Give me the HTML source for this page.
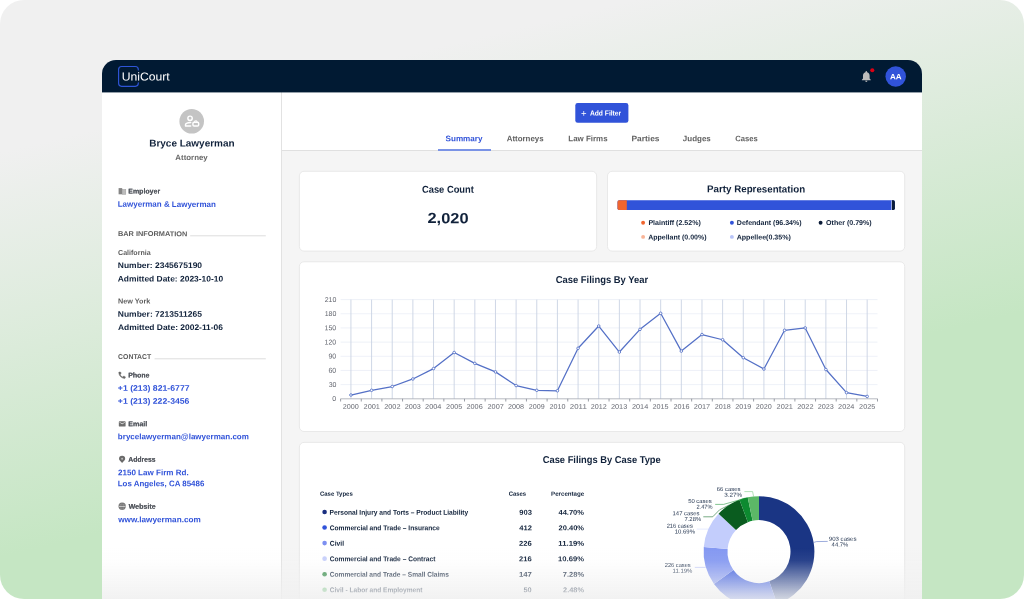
<!DOCTYPE html>
<html lang="en">
<head>
<meta charset="utf-8">
<title>UniCourt – Attorney Analytics</title>
<style>
html,body{margin:0;padding:0;background:#fff;}
body{width:1024px;height:599px;position:relative;overflow:hidden;font-family:"Liberation Sans",Arial,sans-serif;}
.abs{position:absolute;}
.bg{left:0;top:0;width:1024px;height:599px;border-radius:24px;background:linear-gradient(166.5deg,#f0f0f0 0%,#f0f0f0 18%,#c5e6c3 66%,#c5e6c3 100%);}
.app{left:102px;top:60px;width:820px;height:539px;border-radius:14px 14px 0 0;overflow:hidden;background:#f5f5f5;}
.hdr{left:0;top:0;width:820px;height:32px;background:#011a33;}
.side{left:0;top:32px;width:179px;height:507px;background:#fff;border-right:1px solid #e2e2e2;}
.tool{left:180px;top:32px;width:640px;height:58px;background:#fff;border-bottom:1px solid #e0e0e0;}
.t{position:absolute;white-space:nowrap;line-height:1;font-weight:700;transform-origin:0 50%;}
svg{position:absolute;left:0;top:0;overflow:visible;}
.fade{left:102px;top:548px;width:820px;height:51px;background:linear-gradient(to bottom,rgba(243,243,243,0) 0%,rgba(242,242,242,0.08) 25%,rgba(241,241,241,0.42) 57%,rgba(240,240,240,0.73) 86%,rgba(239,239,239,0.86) 100%);}
</style>
</head>
<body>
<div class="abs bg"></div>
<div class="abs app">
  <div class="abs hdr"></div>
  <div class="abs side"></div>
  <div class="abs tool"></div>
  <div class="abs" style="left:0;top:32px;width:820px;height:1px;background:rgba(1,26,51,0.42);"></div>
</div>

<svg width="1024" height="599" viewBox="0 0 1024 599">
  <!-- cards -->
  <g fill="#fff" stroke="#e7e7e7" stroke-width="0.9">
    <rect x="299.4" y="171.3" width="297.2" height="79.8" rx="4.6"/>
    <rect x="607.5" y="171.3" width="297.2" height="79.8" rx="4.6"/>
    <rect x="299.4" y="261.8" width="605.3" height="169.7" rx="4.6"/>
    <rect x="299.4" y="442.4" width="605.3" height="180" rx="4.6"/>
  </g>
</svg>

<!-- tab underline -->
<div class="abs" style="left:437.8px;top:148.6px;width:53.2px;height:2px;background:#7a93e6;"></div>

<svg width="1024" height="599" viewBox="0 0 1024 599">
  <!-- add filter button -->
  <rect x="575.3" y="103" width="53.1" height="19.8" rx="2.4" fill="#3153d9"/>
  <!-- avatar circles -->
  <circle cx="895.7" cy="76.4" r="10.25" fill="#3153d9"/>
  <circle cx="191.7" cy="121.2" r="12.3" fill="#c4c4c4"/>
  <!-- party representation bar -->
  <clipPath id="barclip"><rect x="617.5" y="200.3" width="277.4" height="9.6" rx="1.6"/></clipPath>
  <g clip-path="url(#barclip)">
    <rect x="617" y="200" width="279" height="10.4" fill="#3153d9"/>
    <rect x="617" y="200" width="9.8" height="10.4" fill="#f0652f"/>
    <rect x="891.1" y="200" width="0.9" height="10.4" fill="#b8c4f8"/>
    <rect x="891.9" y="200" width="4" height="10.4" fill="#0b1c38"/>
  </g>
  <!-- legend dots -->
  <circle cx="643.1" cy="222.75" r="1.95" fill="#f0652f"/>
  <circle cx="731.9" cy="222.75" r="1.95" fill="#3153d9"/>
  <circle cx="820.6" cy="222.75" r="1.95" fill="#0b1c38"/>
  <circle cx="643.1" cy="236.9" r="1.95" fill="#f9b497"/>
  <circle cx="731.9" cy="236.9" r="1.95" fill="#b8c4f8"/>
  <!-- table dots -->
  <circle cx="324.6" cy="512.00" r="2.3" fill="#1a2f80"/>
  <circle cx="324.6" cy="527.55" r="2.3" fill="#3153d9"/>
  <circle cx="324.6" cy="543.10" r="2.3" fill="#7d90f1"/>
  <circle cx="324.6" cy="558.65" r="2.3" fill="#c6cffb"/>
  <circle cx="324.6" cy="574.20" r="2.3" fill="#2f8a43"/>
  <circle cx="324.6" cy="589.75" r="2.3" fill="#6cc079"/>
  <!-- section rules -->
  <path d="M190.2 235.8H265.8M154.6 358.8H265.8" stroke="#d6d6d6" stroke-width="0.85" fill="none"/>
  <!-- logo bracket -->
  <path d="M138.3 70V69.5A3 3 0 0 0 135.3 66.5H121.6A3 3 0 0 0 118.6 69.5V83.3A3 3 0 0 0 121.6 86.3H135.3A3 3 0 0 0 138.3 83.3V82.8" fill="none" stroke="#2f55d8" stroke-width="1.15" stroke-linecap="round"/>
  <!-- bell -->
  <g transform="translate(859.65,69.7) scale(0.554)" fill="#bdbdbd"><path d="M12 22c1.1 0 2-.9 2-2h-4c0 1.1.89 2 2 2zm6-6v-5c0-3.07-1.64-5.64-4.5-6.32V4c0-.83-.67-1.5-1.5-1.5s-1.5.67-1.5 1.5v.68C7.63 5.36 6 7.92 6 11v5l-2 2v1h16v-1l-2-2z"/></g>
  <circle cx="872.3" cy="70.3" r="2.05" fill="#db0014"/>
  <!-- profile avatar glyph -->
  <g fill="none" stroke="#fff" stroke-width="1.45" stroke-linecap="round" stroke-linejoin="round">
    <circle cx="190.05" cy="118.3" r="2.2"/>
    <path d="M185.5 126V124.8C185.5 123.6 187.6 122.7 190.7 122.5M185.5 126H190.7"/>
    <rect x="192.95" y="122.2" width="5.7" height="3.8" rx="1.1"/>
    <path d="M194.7 121.7V120.9H196.9V121.7" stroke-width="1"/>
  </g>
  <!-- employer (building) -->
  <rect x="118.6" y="188.1" width="3.6" height="6.2" fill="#858585"/>
  <rect x="122.2" y="189.5" width="3.6" height="4.8" fill="#bcbcbc" stroke="#9c9c9c" stroke-width="0.5"/>
  <!-- phone -->
  <g transform="translate(117.75,370.95) scale(0.355)" fill="#686868" stroke="#686868" stroke-width="1.4" stroke-linejoin="round"><path d="M6.62 10.79c1.44 2.83 3.76 5.14 6.59 6.59l2.2-2.2c.27-.27.67-.36 1.02-.24 1.12.37 2.33.57 3.57.57.55 0 1 .45 1 1V20c0 .55-.45 1-1 1-9.390 0-17-7.610-17-17 0-.55.45-1 1-1h3.5c.55 0 1 .45 1 1 0 1.250.2 2.450.57 3.570.11.35.03.74-.25 1.020l-2.200 2.200z"/></g>
  <!-- email -->
  <g transform="translate(118.15,419.85) scale(0.338)" fill="#6e6e6e"><path d="M20 4H4c-1.100 0-1.990.9-1.990 2L2 18c0 1.100.9 2 2 2h16c1.100 0 2-.9 2-2V6c0-1.100-.9-2-2-2zm0 4l-8 5-8-5V6l8 5 8-5v2z"/></g>
  <!-- address pin -->
  <path d="M122.1 463.1C120.6 461 119 460.1 119 458.9A3.1 3.1 0 0 1 125.2 458.9C125.2 460.1 123.6 461 122.1 463.1Z" fill="#6a6a6a"/>
  <circle cx="122.1" cy="458.8" r="1" fill="#fff" opacity="0.55"/>
  <!-- website globe -->
  <circle cx="122.15" cy="506.25" r="3.65" fill="#737373"/>
  <g fill="none" stroke="#fff"><path d="M118.7 506.4H125.6" stroke-width="0.75" opacity="0.85"/><path d="M119.4 504.5H124.9M119.4 508.2H124.9" stroke-width="0.4" opacity="0.3"/><ellipse cx="122.15" cy="506.25" rx="1.5" ry="3.5" stroke-width="0.35" opacity="0.3"/></g>
  <!-- line chart -->
<line x1="340.6" x2="877.5" y1="384.63" y2="384.63" stroke="#e6ebf5" stroke-width="0.7"/>
<line x1="340.6" x2="877.5" y1="370.46" y2="370.46" stroke="#e6ebf5" stroke-width="0.7"/>
<line x1="340.6" x2="877.5" y1="356.29" y2="356.29" stroke="#e6ebf5" stroke-width="0.7"/>
<line x1="340.6" x2="877.5" y1="342.11" y2="342.11" stroke="#e6ebf5" stroke-width="0.7"/>
<line x1="340.6" x2="877.5" y1="327.94" y2="327.94" stroke="#e6ebf5" stroke-width="0.7"/>
<line x1="340.6" x2="877.5" y1="313.77" y2="313.77" stroke="#e6ebf5" stroke-width="0.7"/>
<line x1="340.6" x2="877.5" y1="299.60" y2="299.60" stroke="#e6ebf5" stroke-width="0.7"/>
<line x1="350.93" x2="350.93" y1="299.6" y2="398.8" stroke="#c9d2e3" stroke-width="0.9"/>
<line x1="371.58" x2="371.58" y1="299.6" y2="398.8" stroke="#c9d2e3" stroke-width="0.9"/>
<line x1="392.23" x2="392.23" y1="299.6" y2="398.8" stroke="#c9d2e3" stroke-width="0.9"/>
<line x1="412.88" x2="412.88" y1="299.6" y2="398.8" stroke="#c9d2e3" stroke-width="0.9"/>
<line x1="433.53" x2="433.53" y1="299.6" y2="398.8" stroke="#c9d2e3" stroke-width="0.9"/>
<line x1="454.18" x2="454.18" y1="299.6" y2="398.8" stroke="#c9d2e3" stroke-width="0.9"/>
<line x1="474.83" x2="474.83" y1="299.6" y2="398.8" stroke="#c9d2e3" stroke-width="0.9"/>
<line x1="495.48" x2="495.48" y1="299.6" y2="398.8" stroke="#c9d2e3" stroke-width="0.9"/>
<line x1="516.12" x2="516.12" y1="299.6" y2="398.8" stroke="#c9d2e3" stroke-width="0.9"/>
<line x1="536.77" x2="536.77" y1="299.6" y2="398.8" stroke="#c9d2e3" stroke-width="0.9"/>
<line x1="557.42" x2="557.42" y1="299.6" y2="398.8" stroke="#c9d2e3" stroke-width="0.9"/>
<line x1="578.08" x2="578.08" y1="299.6" y2="398.8" stroke="#c9d2e3" stroke-width="0.9"/>
<line x1="598.73" x2="598.73" y1="299.6" y2="398.8" stroke="#c9d2e3" stroke-width="0.9"/>
<line x1="619.38" x2="619.38" y1="299.6" y2="398.8" stroke="#c9d2e3" stroke-width="0.9"/>
<line x1="640.02" x2="640.02" y1="299.6" y2="398.8" stroke="#c9d2e3" stroke-width="0.9"/>
<line x1="660.67" x2="660.67" y1="299.6" y2="398.8" stroke="#c9d2e3" stroke-width="0.9"/>
<line x1="681.33" x2="681.33" y1="299.6" y2="398.8" stroke="#c9d2e3" stroke-width="0.9"/>
<line x1="701.98" x2="701.98" y1="299.6" y2="398.8" stroke="#c9d2e3" stroke-width="0.9"/>
<line x1="722.62" x2="722.62" y1="299.6" y2="398.8" stroke="#c9d2e3" stroke-width="0.9"/>
<line x1="743.27" x2="743.27" y1="299.6" y2="398.8" stroke="#c9d2e3" stroke-width="0.9"/>
<line x1="763.92" x2="763.92" y1="299.6" y2="398.8" stroke="#c9d2e3" stroke-width="0.9"/>
<line x1="784.58" x2="784.58" y1="299.6" y2="398.8" stroke="#c9d2e3" stroke-width="0.9"/>
<line x1="805.22" x2="805.22" y1="299.6" y2="398.8" stroke="#c9d2e3" stroke-width="0.9"/>
<line x1="825.88" x2="825.88" y1="299.6" y2="398.8" stroke="#c9d2e3" stroke-width="0.9"/>
<line x1="846.52" x2="846.52" y1="299.6" y2="398.8" stroke="#c9d2e3" stroke-width="0.9"/>
<line x1="867.17" x2="867.17" y1="299.6" y2="398.8" stroke="#c9d2e3" stroke-width="0.9"/>
<line x1="340.6" x2="877.5" y1="398.8" y2="398.8" stroke="#a4a8b2" stroke-width="0.8"/>
<line x1="340.60" x2="340.60" y1="398.8" y2="401.5" stroke="#7a7e88" stroke-width="0.75"/>
<line x1="361.25" x2="361.25" y1="398.8" y2="401.5" stroke="#7a7e88" stroke-width="0.75"/>
<line x1="381.90" x2="381.90" y1="398.8" y2="401.5" stroke="#7a7e88" stroke-width="0.75"/>
<line x1="402.55" x2="402.55" y1="398.8" y2="401.5" stroke="#7a7e88" stroke-width="0.75"/>
<line x1="423.20" x2="423.20" y1="398.8" y2="401.5" stroke="#7a7e88" stroke-width="0.75"/>
<line x1="443.85" x2="443.85" y1="398.8" y2="401.5" stroke="#7a7e88" stroke-width="0.75"/>
<line x1="464.50" x2="464.50" y1="398.8" y2="401.5" stroke="#7a7e88" stroke-width="0.75"/>
<line x1="485.15" x2="485.15" y1="398.8" y2="401.5" stroke="#7a7e88" stroke-width="0.75"/>
<line x1="505.80" x2="505.80" y1="398.8" y2="401.5" stroke="#7a7e88" stroke-width="0.75"/>
<line x1="526.45" x2="526.45" y1="398.8" y2="401.5" stroke="#7a7e88" stroke-width="0.75"/>
<line x1="547.10" x2="547.10" y1="398.8" y2="401.5" stroke="#7a7e88" stroke-width="0.75"/>
<line x1="567.75" x2="567.75" y1="398.8" y2="401.5" stroke="#7a7e88" stroke-width="0.75"/>
<line x1="588.40" x2="588.40" y1="398.8" y2="401.5" stroke="#7a7e88" stroke-width="0.75"/>
<line x1="609.05" x2="609.05" y1="398.8" y2="401.5" stroke="#7a7e88" stroke-width="0.75"/>
<line x1="629.70" x2="629.70" y1="398.8" y2="401.5" stroke="#7a7e88" stroke-width="0.75"/>
<line x1="650.35" x2="650.35" y1="398.8" y2="401.5" stroke="#7a7e88" stroke-width="0.75"/>
<line x1="671.00" x2="671.00" y1="398.8" y2="401.5" stroke="#7a7e88" stroke-width="0.75"/>
<line x1="691.65" x2="691.65" y1="398.8" y2="401.5" stroke="#7a7e88" stroke-width="0.75"/>
<line x1="712.30" x2="712.30" y1="398.8" y2="401.5" stroke="#7a7e88" stroke-width="0.75"/>
<line x1="732.95" x2="732.95" y1="398.8" y2="401.5" stroke="#7a7e88" stroke-width="0.75"/>
<line x1="753.60" x2="753.60" y1="398.8" y2="401.5" stroke="#7a7e88" stroke-width="0.75"/>
<line x1="774.25" x2="774.25" y1="398.8" y2="401.5" stroke="#7a7e88" stroke-width="0.75"/>
<line x1="794.90" x2="794.90" y1="398.8" y2="401.5" stroke="#7a7e88" stroke-width="0.75"/>
<line x1="815.55" x2="815.55" y1="398.8" y2="401.5" stroke="#7a7e88" stroke-width="0.75"/>
<line x1="836.20" x2="836.20" y1="398.8" y2="401.5" stroke="#7a7e88" stroke-width="0.75"/>
<line x1="856.85" x2="856.85" y1="398.8" y2="401.5" stroke="#7a7e88" stroke-width="0.75"/>
<line x1="877.50" x2="877.50" y1="398.8" y2="401.5" stroke="#7a7e88" stroke-width="0.75"/>
<polyline fill="none" stroke="#5470c6" stroke-width="1.25" stroke-linejoin="round" points="350.93,395.02 371.58,390.30 392.23,386.52 412.88,378.96 433.53,368.57 454.18,352.51 474.83,363.37 495.48,371.87 516.12,385.57 536.77,390.30 557.42,390.77 578.08,348.26 598.73,326.05 619.38,352.03 640.02,329.36 660.67,313.30 681.33,351.09 701.98,334.56 722.62,339.75 743.27,357.70 763.92,369.04 784.58,330.30 805.22,327.94 825.88,369.51 846.52,392.66 867.17,396.44"/>
<circle cx="350.93" cy="395.02" r="1.3" fill="#fff" stroke="#5470c6" stroke-width="0.85"/>
<circle cx="371.58" cy="390.30" r="1.3" fill="#fff" stroke="#5470c6" stroke-width="0.85"/>
<circle cx="392.23" cy="386.52" r="1.3" fill="#fff" stroke="#5470c6" stroke-width="0.85"/>
<circle cx="412.88" cy="378.96" r="1.3" fill="#fff" stroke="#5470c6" stroke-width="0.85"/>
<circle cx="433.53" cy="368.57" r="1.3" fill="#fff" stroke="#5470c6" stroke-width="0.85"/>
<circle cx="454.18" cy="352.51" r="1.3" fill="#fff" stroke="#5470c6" stroke-width="0.85"/>
<circle cx="474.83" cy="363.37" r="1.3" fill="#fff" stroke="#5470c6" stroke-width="0.85"/>
<circle cx="495.48" cy="371.87" r="1.3" fill="#fff" stroke="#5470c6" stroke-width="0.85"/>
<circle cx="516.12" cy="385.57" r="1.3" fill="#fff" stroke="#5470c6" stroke-width="0.85"/>
<circle cx="536.77" cy="390.30" r="1.3" fill="#fff" stroke="#5470c6" stroke-width="0.85"/>
<circle cx="557.42" cy="390.77" r="1.3" fill="#fff" stroke="#5470c6" stroke-width="0.85"/>
<circle cx="578.08" cy="348.26" r="1.3" fill="#fff" stroke="#5470c6" stroke-width="0.85"/>
<circle cx="598.73" cy="326.05" r="1.3" fill="#fff" stroke="#5470c6" stroke-width="0.85"/>
<circle cx="619.38" cy="352.03" r="1.3" fill="#fff" stroke="#5470c6" stroke-width="0.85"/>
<circle cx="640.02" cy="329.36" r="1.3" fill="#fff" stroke="#5470c6" stroke-width="0.85"/>
<circle cx="660.67" cy="313.30" r="1.3" fill="#fff" stroke="#5470c6" stroke-width="0.85"/>
<circle cx="681.33" cy="351.09" r="1.3" fill="#fff" stroke="#5470c6" stroke-width="0.85"/>
<circle cx="701.98" cy="334.56" r="1.3" fill="#fff" stroke="#5470c6" stroke-width="0.85"/>
<circle cx="722.62" cy="339.75" r="1.3" fill="#fff" stroke="#5470c6" stroke-width="0.85"/>
<circle cx="743.27" cy="357.70" r="1.3" fill="#fff" stroke="#5470c6" stroke-width="0.85"/>
<circle cx="763.92" cy="369.04" r="1.3" fill="#fff" stroke="#5470c6" stroke-width="0.85"/>
<circle cx="784.58" cy="330.30" r="1.3" fill="#fff" stroke="#5470c6" stroke-width="0.85"/>
<circle cx="805.22" cy="327.94" r="1.3" fill="#fff" stroke="#5470c6" stroke-width="0.85"/>
<circle cx="825.88" cy="369.51" r="1.3" fill="#fff" stroke="#5470c6" stroke-width="0.85"/>
<circle cx="846.52" cy="392.66" r="1.3" fill="#fff" stroke="#5470c6" stroke-width="0.85"/>
<circle cx="867.17" cy="396.44" r="1.3" fill="#fff" stroke="#5470c6" stroke-width="0.85"/>
  <!-- donut -->
<path d="M759.00 496.20A55.4 55.4 0 0 1 777.10 603.96L769.29 581.37A31.5 31.5 0 0 0 759.00 520.10Z" fill="#1a3584"/>
<path d="M777.10 603.96A55.4 55.4 0 0 1 713.98 583.88L733.40 569.96A31.5 31.5 0 0 0 769.29 581.37Z" fill="#3f5fe0"/>
<path d="M713.98 583.88A55.4 55.4 0 0 1 703.78 547.12L727.60 549.06A31.5 31.5 0 0 0 733.40 569.96Z" fill="#8599f2"/>
<path d="M703.78 547.12A55.4 55.4 0 0 1 718.57 513.73L736.01 530.07A31.5 31.5 0 0 0 727.60 549.06Z" fill="#c3cdfc"/>
<path d="M718.57 513.73A55.4 55.4 0 0 1 739.44 499.77L747.88 522.13A31.5 31.5 0 0 0 736.01 530.07Z" fill="#0a5c1f"/>
<path d="M739.44 499.77A55.4 55.4 0 0 1 747.71 497.36L752.58 520.76A31.5 31.5 0 0 0 747.88 522.13Z" fill="#0d8a30"/>
<path d="M747.71 497.36A55.4 55.4 0 0 1 759.00 496.20L759.00 520.10A31.5 31.5 0 0 0 752.58 520.76Z" fill="#5cb867"/>
<polyline fill="none" stroke="#5b74c4" stroke-width="0.6" points="813.8,542.4 816.5,541.6 827.7,541.4"/>
<polyline fill="none" stroke="#7cc987" stroke-width="0.6" points="753.6,496.6 752.6,491.6 744.4,491.6"/>
<polyline fill="none" stroke="#2e9a45" stroke-width="0.6" points="744.6,498.2 740.5,499.6 723.6,504.4 715.2,504.4"/>
<polyline fill="none" stroke="#1d7030" stroke-width="0.6" points="729.5,504.8 719.6,509.8 712.7,516.8 703.3,516.8"/>
<polyline fill="none" stroke="#d5dcfd" stroke-width="0.6" points="708.4,529.1 696.8,529.1"/>
<polyline fill="none" stroke="#a9b7f6" stroke-width="0.6" points="705.7,567.4 694.8,567.4"/>
</svg>

<div class="abs" id="txt" style="left:0;top:0;width:1024px;height:599px;will-change:transform;">
<span class="t" style="left:121px;top:71px;font-size:11.5px;color:#fff;font-weight:400;transform:translate(0.70px,0.47px) rotate(0.03deg) scaleX(1.0573);">UniCourt</span>
<span class="t" style="left:889px;top:73px;font-size:7.6px;color:#fff;transform:translate(0.98px,0.37px) rotate(0.03deg) scaleX(1.0605);">AA</span>
<span class="t" style="left:149px;top:138px;font-size:9.9px;color:#10213a;transform:translate(0.25px,0.40px) rotate(0.03deg) scaleX(1.0096);">Bryce Lawyerman</span>
<span class="t" style="left:175px;top:153px;font-size:7.8px;color:#686868;transform:translate(0.37px,0.90px) rotate(0.03deg) scaleX(1.0092);">Attorney</span>
<span class="t" style="left:128px;top:188px;font-size:7.1px;color:#575b62;transform:translate(0.21px,0.50px) rotate(0.03deg) scaleX(0.9866);text-shadow:0.15px 0 0 #575b62;">Employer</span>
<span class="t" style="left:117px;top:200px;font-size:8.1px;color:#3153d9;transform:translate(0.71px,0.85px) rotate(0.03deg) scaleX(0.9869);">Lawyerman &amp; Lawyerman</span>
<span class="t" style="left:117px;top:230px;font-size:7.0px;color:#5c5c5c;transform:translate(0.98px,0.10px) rotate(0.03deg) scaleX(1.0506);">BAR INFORMATION</span>
<span class="t" style="left:118px;top:248px;font-size:7.2px;color:#5c5c5c;transform:translate(0.03px,0.90px) rotate(0.03deg) scaleX(0.9835);">California</span>
<span class="t" style="left:117px;top:262px;font-size:8.1px;color:#10213a;transform:translate(0.83px,0.05px) rotate(0.03deg) scaleX(1.0460);">Number: 2345675190</span>
<span class="t" style="left:117px;top:275px;font-size:8.1px;color:#10213a;transform:translate(0.74px,0.45px) rotate(0.03deg) scaleX(1.0412);">Admitted Date: 2023-10-10</span>
<span class="t" style="left:117px;top:297px;font-size:7.2px;color:#5c5c5c;transform:translate(0.99px,0.40px) rotate(0.03deg) scaleX(1.0069);">New York</span>
<span class="t" style="left:117px;top:310px;font-size:8.1px;color:#10213a;transform:translate(0.79px,0.75px) rotate(0.03deg) scaleX(1.0502);">Number: 7213511265</span>
<span class="t" style="left:117px;top:324px;font-size:8.1px;color:#10213a;transform:translate(0.90px,0.05px) rotate(0.03deg) scaleX(1.0432);">Admitted Date: 2002-11-06</span>
<span class="t" style="left:118px;top:353px;font-size:7.0px;color:#5c5c5c;transform:translate(0.09px,0.00px) rotate(0.03deg) scaleX(0.9854);">CONTACT</span>
<span class="t" style="left:128px;top:372px;font-size:7.1px;color:#575b62;transform:translate(0.21px,0.60px) rotate(0.03deg) scaleX(0.9759);text-shadow:0.15px 0 0 #575b62;">Phone</span>
<span class="t" style="left:117px;top:384px;font-size:8.1px;color:#3153d9;transform:translate(0.84px,0.65px) rotate(0.03deg) scaleX(1.0729);">+1 (213) 821-6777</span>
<span class="t" style="left:117px;top:397px;font-size:8.1px;color:#3153d9;transform:translate(0.84px,0.65px) rotate(0.03deg) scaleX(1.0711);">+1 (213) 222-3456</span>
<span class="t" style="left:128px;top:421px;font-size:7.1px;color:#575b62;transform:translate(0.18px,0.20px) rotate(0.03deg) scaleX(1.0016);text-shadow:0.15px 0 0 #575b62;">Email</span>
<span class="t" style="left:117px;top:433px;font-size:8.1px;color:#3153d9;transform:translate(0.87px,0.15px) rotate(0.03deg) scaleX(0.9923);">brycelawyerman@lawyerman.com</span>
<span class="t" style="left:128px;top:456px;font-size:7.1px;color:#575b62;transform:translate(0.22px,0.80px) rotate(0.03deg) scaleX(0.9606);text-shadow:0.15px 0 0 #575b62;">Address</span>
<span class="t" style="left:117px;top:469px;font-size:8.1px;color:#3153d9;transform:translate(0.93px,0.15px) rotate(0.03deg) scaleX(0.9958);">2150 Law Firm Rd.</span>
<span class="t" style="left:117px;top:480px;font-size:8.1px;color:#3153d9;transform:translate(0.73px,0.25px) rotate(0.03deg) scaleX(0.9786);">Los Angeles, CA 85486</span>
<span class="t" style="left:128px;top:503px;font-size:7.1px;color:#575b62;transform:translate(0.57px,0.80px) rotate(0.03deg) scaleX(0.9972);text-shadow:0.15px 0 0 #575b62;">Website</span>
<span class="t" style="left:118px;top:516px;font-size:8.1px;color:#3153d9;transform:translate(0.14px,0.25px) rotate(0.03deg) scaleX(1.0136);">www.lawyerman.com</span>
<span class="t" style="left:580px;top:108px;font-size:9.5px;color:#fff;font-weight:400;transform:translate(0.88px,0.50px) rotate(0.03deg);">+</span>
<span class="t" style="left:589px;top:109px;font-size:7.2px;color:#fff;transform:translate(0.88px,0.40px) rotate(0.03deg) scaleX(0.9337);">Add Filter</span>
<span class="t" style="left:445px;top:135px;font-size:8.1px;color:#3153d9;transform:translate(0.51px,0.35px) rotate(0.03deg) scaleX(1.0039);">Summary</span>
<span class="t" style="left:506px;top:135px;font-size:8.0px;color:#616161;transform:translate(0.70px,0.30px) rotate(0.03deg) scaleX(0.9896);">Attorneys</span>
<span class="t" style="left:568px;top:135px;font-size:8.0px;color:#616161;transform:translate(0.34px,0.30px) rotate(0.03deg) scaleX(0.9917);">Law Firms</span>
<span class="t" style="left:631px;top:135px;font-size:8.0px;color:#616161;transform:translate(0.52px,0.30px) rotate(0.03deg) scaleX(1.0483);">Parties</span>
<span class="t" style="left:682px;top:135px;font-size:8.0px;color:#616161;transform:translate(0.81px,0.30px) rotate(0.03deg) scaleX(0.9981);">Judges</span>
<span class="t" style="left:735px;top:135px;font-size:8.0px;color:#616161;transform:translate(0.21px,0.30px) rotate(0.03deg) scaleX(0.9542);">Cases</span>
<span class="t" style="left:421px;top:184px;font-size:10.0px;color:#10213a;transform:translate(0.97px,0.65px) rotate(0.03deg) scaleX(0.9337);">Case Count</span>
<span class="t" style="left:427px;top:211px;font-size:14.8px;color:#10213a;transform:translate(0.51px,0.12px) rotate(0.03deg) scaleX(1.1071);">2,020</span>
<span class="t" style="left:707px;top:184px;font-size:10.0px;color:#10213a;transform:translate(0.08px,0.35px) rotate(0.03deg) scaleX(0.9750);">Party Representation</span>
<span class="t" style="left:648px;top:219px;font-size:7px;color:#10213a;transform:translate(0.39px,0.00px) rotate(0.03deg) scaleX(1.0040);">Plaintiff (2.52%)</span>
<span class="t" style="left:736px;top:219px;font-size:7px;color:#10213a;transform:translate(0.82px,0.00px) rotate(0.03deg) scaleX(1.0033);">Defendant (96.34%)</span>
<span class="t" style="left:826px;top:219px;font-size:7px;color:#10213a;transform:translate(0.04px,0.00px) rotate(0.03deg) scaleX(1.0108);">Other (0.79%)</span>
<span class="t" style="left:648px;top:233px;font-size:7px;color:#10213a;transform:translate(0.13px,0.40px) rotate(0.03deg) scaleX(1.0010);">Appellant (0.00%)</span>
<span class="t" style="left:736px;top:233px;font-size:7px;color:#10213a;transform:translate(0.69px,0.40px) rotate(0.03deg) scaleX(1.0085);">Appellee(0.35%)</span>
<span class="t" style="left:555px;top:275px;font-size:10.0px;color:#10213a;transform:translate(0.69px,0.05px) rotate(0.03deg) scaleX(0.9420);">Case Filings By Year</span>
<span class="t" style="left:542px;top:455px;font-size:10.0px;color:#10213a;transform:translate(0.77px,0.15px) rotate(0.03deg) scaleX(0.9324);">Case Filings By Case Type</span>
<span class="t" style="left:332px;top:395px;font-size:7.0px;color:#63666f;font-weight:400;transform:translate(0.16px,0.10px) rotate(0.03deg);">0</span>
<span class="t" style="left:328px;top:380px;font-size:7.0px;color:#63666f;font-weight:400;transform:translate(0.68px,0.93px) rotate(0.03deg);">30</span>
<span class="t" style="left:328px;top:366px;font-size:7.0px;color:#63666f;font-weight:400;transform:translate(0.43px,0.76px) rotate(0.03deg);">60</span>
<span class="t" style="left:328px;top:352px;font-size:7.0px;color:#63666f;font-weight:400;transform:translate(0.46px,0.59px) rotate(0.03deg);">90</span>
<span class="t" style="left:324px;top:338px;font-size:7.0px;color:#63666f;font-weight:400;transform:translate(0.55px,0.41px) rotate(0.03deg);">120</span>
<span class="t" style="left:324px;top:324px;font-size:7.0px;color:#63666f;font-weight:400;transform:translate(0.57px,0.24px) rotate(0.03deg);">150</span>
<span class="t" style="left:324px;top:310px;font-size:7.0px;color:#63666f;font-weight:400;transform:translate(0.68px,0.07px) rotate(0.03deg);">180</span>
<span class="t" style="left:324px;top:295px;font-size:7.0px;color:#63666f;font-weight:400;transform:translate(0.68px,0.90px) rotate(0.03deg);">210</span>
<span class="t" style="left:342px;top:403px;font-size:6.7px;color:#63666f;font-weight:400;transform:translate(0.79px,0.73px) rotate(0.03deg) scaleX(1.0780);">2000</span>
<span class="t" style="left:363px;top:403px;font-size:6.7px;color:#63666f;font-weight:400;transform:translate(0.57px,0.73px) rotate(0.03deg) scaleX(1.1005);">2001</span>
<span class="t" style="left:384px;top:403px;font-size:6.7px;color:#63666f;font-weight:400;transform:translate(0.20px,0.73px) rotate(0.03deg) scaleX(1.0958);">2002</span>
<span class="t" style="left:404px;top:403px;font-size:6.7px;color:#63666f;font-weight:400;transform:translate(0.65px,0.73px) rotate(0.03deg) scaleX(1.0883);">2003</span>
<span class="t" style="left:425px;top:403px;font-size:6.7px;color:#63666f;font-weight:400;transform:translate(0.09px,0.73px) rotate(0.03deg) scaleX(1.0989);">2004</span>
<span class="t" style="left:446px;top:403px;font-size:6.7px;color:#63666f;font-weight:400;transform:translate(0.10px,0.73px) rotate(0.03deg) scaleX(1.0832);">2005</span>
<span class="t" style="left:466px;top:403px;font-size:6.7px;color:#63666f;font-weight:400;transform:translate(0.48px,0.73px) rotate(0.03deg) scaleX(1.0890);">2006</span>
<span class="t" style="left:487px;top:403px;font-size:6.7px;color:#63666f;font-weight:400;transform:translate(0.54px,0.73px) rotate(0.03deg) scaleX(1.0930);">2007</span>
<span class="t" style="left:508px;top:403px;font-size:6.7px;color:#63666f;font-weight:400;transform:translate(0.01px,0.73px) rotate(0.03deg) scaleX(1.0749);">2008</span>
<span class="t" style="left:528px;top:403px;font-size:6.7px;color:#63666f;font-weight:400;transform:translate(0.77px,0.73px) rotate(0.03deg) scaleX(1.0653);">2009</span>
<span class="t" style="left:549px;top:403px;font-size:6.7px;color:#63666f;font-weight:400;transform:translate(0.43px,0.73px) rotate(0.03deg) scaleX(1.0730);">2010</span>
<span class="t" style="left:569px;top:403px;font-size:6.7px;color:#63666f;font-weight:400;transform:translate(0.83px,0.73px) rotate(0.03deg) scaleX(1.1796);">2011</span>
<span class="t" style="left:590px;top:403px;font-size:6.7px;color:#63666f;font-weight:400;transform:translate(0.71px,0.73px) rotate(0.03deg) scaleX(1.0741);">2012</span>
<span class="t" style="left:610px;top:403px;font-size:6.7px;color:#63666f;font-weight:400;transform:translate(0.91px,0.73px) rotate(0.03deg) scaleX(1.0996);">2013</span>
<span class="t" style="left:631px;top:403px;font-size:6.7px;color:#63666f;font-weight:400;transform:translate(0.96px,0.73px) rotate(0.03deg) scaleX(1.0963);">2014</span>
<span class="t" style="left:652px;top:403px;font-size:6.7px;color:#63666f;font-weight:400;transform:translate(0.42px,0.73px) rotate(0.03deg) scaleX(1.0807);">2015</span>
<span class="t" style="left:673px;top:403px;font-size:6.7px;color:#63666f;font-weight:400;transform:translate(0.39px,0.73px) rotate(0.03deg) scaleX(1.0817);">2016</span>
<span class="t" style="left:693px;top:403px;font-size:6.7px;color:#63666f;font-weight:400;transform:translate(0.83px,0.73px) rotate(0.03deg) scaleX(1.0969);">2017</span>
<span class="t" style="left:714px;top:403px;font-size:6.7px;color:#63666f;font-weight:400;transform:translate(0.69px,0.73px) rotate(0.03deg) scaleX(1.0738);">2018</span>
<span class="t" style="left:735px;top:403px;font-size:6.7px;color:#63666f;font-weight:400;transform:translate(0.27px,0.73px) rotate(0.03deg) scaleX(1.0783);">2019</span>
<span class="t" style="left:755px;top:403px;font-size:6.7px;color:#63666f;font-weight:400;transform:translate(0.79px,0.73px) rotate(0.03deg) scaleX(1.0780);">2020</span>
<span class="t" style="left:776px;top:403px;font-size:6.7px;color:#63666f;font-weight:400;transform:translate(0.57px,0.73px) rotate(0.03deg) scaleX(1.1005);">2021</span>
<span class="t" style="left:797px;top:403px;font-size:6.7px;color:#63666f;font-weight:400;transform:translate(0.20px,0.73px) rotate(0.03deg) scaleX(1.0958);">2022</span>
<span class="t" style="left:817px;top:403px;font-size:6.7px;color:#63666f;font-weight:400;transform:translate(0.65px,0.73px) rotate(0.03deg) scaleX(1.0883);">2023</span>
<span class="t" style="left:838px;top:403px;font-size:6.7px;color:#63666f;font-weight:400;transform:translate(0.09px,0.73px) rotate(0.03deg) scaleX(1.0989);">2024</span>
<span class="t" style="left:859px;top:403px;font-size:6.7px;color:#63666f;font-weight:400;transform:translate(0.10px,0.73px) rotate(0.03deg) scaleX(1.0832);">2025</span>
<span class="t" style="left:319px;top:490px;font-size:6px;color:#10213a;transform:translate(0.92px,0.70px) rotate(0.03deg) scaleX(0.9977);">Case Types</span>
<span class="t" style="left:508px;top:490px;font-size:6px;color:#10213a;transform:translate(0.65px,0.70px) rotate(0.03deg) scaleX(0.9887);">Cases</span>
<span class="t" style="left:551px;top:490px;font-size:6px;color:#10213a;transform:translate(0.10px,0.70px) rotate(0.03deg) scaleX(1.0234);">Percentage</span>
<span class="t" style="left:329px;top:508px;font-size:7px;color:#10213a;transform:translate(0.54px,0.70px) rotate(0.03deg) scaleX(0.9467);">Personal Injury and Torts – Product Liability</span>
<span class="t" style="left:519px;top:508px;font-size:7px;color:#10213a;transform:translate(0.23px,0.70px) rotate(0.03deg) scaleX(1.0844);">903</span>
<span class="t" style="left:558px;top:508px;font-size:7px;color:#10213a;transform:translate(0.45px,0.70px) rotate(0.03deg) scaleX(1.0749);">44.70%</span>
<span class="t" style="left:329px;top:524px;font-size:7px;color:#10213a;transform:translate(0.77px,0.20px) rotate(0.03deg) scaleX(0.9484);">Commercial and Trade – Insurance</span>
<span class="t" style="left:519px;top:524px;font-size:7px;color:#10213a;transform:translate(0.23px,0.20px) rotate(0.03deg) scaleX(1.0849);">412</span>
<span class="t" style="left:558px;top:524px;font-size:7px;color:#10213a;transform:translate(0.57px,0.20px) rotate(0.03deg) scaleX(1.0723);">20.40%</span>
<span class="t" style="left:329px;top:539px;font-size:7px;color:#10213a;transform:translate(0.76px,0.70px) rotate(0.03deg) scaleX(0.9656);">Civil</span>
<span class="t" style="left:519px;top:539px;font-size:7px;color:#10213a;transform:translate(0.05px,0.70px) rotate(0.03deg) scaleX(1.0908);">226</span>
<span class="t" style="left:558px;top:539px;font-size:7px;color:#10213a;transform:translate(0.34px,0.70px) rotate(0.03deg) scaleX(1.1020);">11.19%</span>
<span class="t" style="left:329px;top:555px;font-size:7px;color:#10213a;transform:translate(0.77px,0.20px) rotate(0.03deg) scaleX(0.9461);">Commercial and Trade – Contract</span>
<span class="t" style="left:519px;top:555px;font-size:7px;color:#10213a;transform:translate(0.12px,0.20px) rotate(0.03deg) scaleX(1.0853);">216</span>
<span class="t" style="left:558px;top:555px;font-size:7px;color:#10213a;transform:translate(0.06px,0.20px) rotate(0.03deg) scaleX(1.0909);">10.69%</span>
<span class="t" style="left:329px;top:570px;font-size:7px;color:#10213a;transform:translate(0.76px,0.70px) rotate(0.03deg) scaleX(0.9419);">Commercial and Trade – Small Claims</span>
<span class="t" style="left:518px;top:570px;font-size:7px;color:#10213a;transform:translate(0.94px,0.70px) rotate(0.03deg) scaleX(1.1057);">147</span>
<span class="t" style="left:562px;top:570px;font-size:7px;color:#10213a;transform:translate(0.87px,0.70px) rotate(0.03deg) scaleX(1.0666);">7.28%</span>
<span class="t" style="left:329px;top:586px;font-size:7px;color:#10213a;transform:translate(0.77px,0.20px) rotate(0.03deg) scaleX(0.9379);">Civil - Labor and Employment</span>
<span class="t" style="left:523px;top:586px;font-size:7px;color:#10213a;transform:translate(0.46px,0.20px) rotate(0.03deg) scaleX(1.0565);">50</span>
<span class="t" style="left:563px;top:586px;font-size:7px;color:#10213a;transform:translate(0.04px,0.20px) rotate(0.03deg) scaleX(1.0547);">2.48%</span>
<span class="t" style="left:828px;top:536px;font-size:5.8px;color:#23344f;font-weight:400;transform:translate(0.83px,0.70px) rotate(0.03deg) scaleX(1.0443);">903 cases</span>
<span class="t" style="left:831px;top:542px;font-size:5.8px;color:#23344f;font-weight:400;transform:translate(0.60px,0.55px) rotate(0.03deg) scaleX(1.0201);">44.7%</span>
<span class="t" style="left:716px;top:487px;font-size:5.8px;color:#23344f;font-weight:400;transform:translate(0.77px,0.00px) rotate(0.03deg) scaleX(1.0190);">66 cases</span>
<span class="t" style="left:724px;top:492px;font-size:5.8px;color:#23344f;font-weight:400;transform:translate(0.20px,0.65px) rotate(0.03deg) scaleX(1.0874);">3.27%</span>
<span class="t" style="left:688px;top:498px;font-size:5.8px;color:#23344f;font-weight:400;transform:translate(0.13px,0.90px) rotate(0.03deg) scaleX(1.0104);">50 cases</span>
<span class="t" style="left:696px;top:504px;font-size:5.8px;color:#23344f;font-weight:400;transform:translate(0.44px,0.75px) rotate(0.03deg) scaleX(0.9743);">2.47%</span>
<span class="t" style="left:672px;top:511px;font-size:5.8px;color:#23344f;font-weight:400;transform:translate(0.58px,0.30px) rotate(0.03deg) scaleX(1.0154);">147 cases</span>
<span class="t" style="left:684px;top:517px;font-size:5.8px;color:#23344f;font-weight:400;transform:translate(0.46px,0.05px) rotate(0.03deg) scaleX(1.0151);">7.28%</span>
<span class="t" style="left:666px;top:523px;font-size:5.8px;color:#23344f;font-weight:400;transform:translate(0.66px,0.80px) rotate(0.03deg) scaleX(0.9886);">216 cases</span>
<span class="t" style="left:674px;top:529px;font-size:5.8px;color:#23344f;font-weight:400;transform:translate(0.72px,0.55px) rotate(0.03deg) scaleX(1.0314);">10.69%</span>
<span class="t" style="left:664px;top:562px;font-size:5.8px;color:#23344f;font-weight:400;transform:translate(0.76px,0.90px) rotate(0.03deg) scaleX(0.9814);">226 cases</span>
<span class="t" style="left:672px;top:568px;font-size:5.8px;color:#23344f;font-weight:400;transform:translate(0.59px,0.75px) rotate(0.03deg) scaleX(1.0326);">11.19%</span>
</div>

<div class="abs fade"></div>
</body>
</html>
